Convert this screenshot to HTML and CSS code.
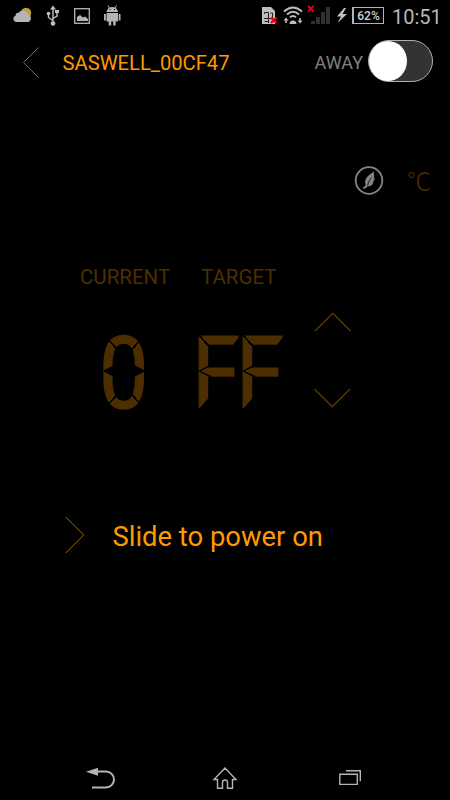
FILE: index.html
```html
<!DOCTYPE html>
<html lang="en">
<head>
    <meta charset="UTF-8">
    <meta name="viewport" content="width=device-width, initial-scale=1.0">
    <title>Thermostat</title>
    <link rel="stylesheet" href="styles.css">
</head>
<body>
    <div class="screen">
        <!-- Status bar -->
        <div class="status-bar">
            <svg class="status-icons" width="130" height="32" viewBox="0 0 130 32">
                <circle cx="26" cy="13" r="5.2" fill="#c3a43c"/>
                <path d="M16 22a3.2 3.2 0 0 1-.5-6.2 3 3 0 0 1 3.2-3 5 5 0 0 1 9 1.5 4 4 0 0 1 .5 7.7z" fill="#b4b4b4"/>
                <g fill="none" stroke="#c0c0c0" stroke-width="1.4">
                    <path d="M53 8v15M48.500 14v3.500l4.500 3M57 12v4l-4 2.500"/>
                </g>
                <path d="M53 5.500l3 4h-6zM55 10h4v3h-4z" fill="#c0c0c0"/>
                <circle cx="48.500" cy="13.500" r="1.800" fill="#c0c0c0"/>
                <circle cx="53" cy="23.500" r="2.300" fill="#c0c0c0"/>
                <rect x="74.700" y="8.700" width="14.600" height="14.600" fill="none" stroke="#b4b4b4" stroke-width="1.300"/>
                <path d="M77 21v-4l3-2 3 2.500 2-1 3 2.500v2z" fill="#b4b4b4"/>
                <path d="M106.500 12a5.700 5 0 0 1 11.500 0zM106.500 13H118v8.500h-2.300v4h-2.500v-4h-2v4h-2.500v-4h-2.200zM104 14h1.800v6.500H104zM118.700 14h1.800v6.500h-1.800z" fill="#b4b4b4"/>
                <path d="M108 5.500l1.700 3M116.500 5.500l-1.700 3" stroke="#b4b4b4"/>
                <path d="M109.500 9.500h1M114 9.500h1" stroke="#000"/>
            </svg>
            <div class="status-right">
                <svg width="90" height="32" viewBox="260 0 90 32">
                    <path d="M262 7h9l4 4v13h-13z" fill="#bdbdbd"/>
                    <path d="M264.500 14v-1.500h4V18M272.500 18v-5h-2M264 18.500h8M268.500 18v5M264.500 21.500h4" stroke="#222" fill="none"/>
                    <path d="M271 17.500l5.500 5.500M276.500 17.500l-5.500 5.500" stroke="#e60012" stroke-width="2.400"/>
                    <g fill="none" stroke="#bdbdbd" stroke-width="1.900">
                        <path d="M284 11.500q9-8 18 0M287 14.500q6-5.500 12 0M290 17.300q3-2.500 6 0"/>
                    </g>
                    <path d="M289.500 24a3.500 3.500 0 0 1 7 0zM286 17.500l2.500 3h-1.700v2.500h-1.600v-2.500h-1.700zM300 23.500l-2.500-3h1.700v-2.500h1.600v2.500h1.700z" fill="#bdbdbd"/>
                    <path d="M308 6l5.500 5.500M313.500 6l-5.500 5.500" stroke="#e60012" stroke-width="2"/>
                    <path d="M311 21h4v3h-4zM316 17h4v7h-4zM321 12h4v12h-4zM326 7h4v17h-4z" fill="#303030"/>
                    <path d="M344 8l-7 8.500h4l-3.500 6.500 9.500-9h-4.500l3.500-6z" fill="#c0c0c0"/>
                </svg>
                <div class="battery">62%</div>
                <div class="clock">10:51</div>
            </div>
        </div>

        <!-- Header -->
        <div class="header">
            <svg class="back" width="18" height="32" viewBox="0 0 18 32">
                <path d="M16.500 1.500L1.500 16.500l15 15"/>
            </svg>
            <h1 class="title">SASWELL_00CF47</h1>
            <span class="away">AWAY</span>
            <div class="switch"><div class="knob"></div></div>
        </div>

        <div class="mode">
            <svg width="30" height="30" viewBox="0 0 30 30">
                <circle cx="15" cy="15.500" r="13.300" fill="none" stroke="#848484" stroke-width="1.800"/>
                <path d="M19.500 6.500c-1 1.500-4 2.500-6 5-2.800 3.500-2.800 5.500-1.800 8-.6 1.800-1.300 2.300-2.800 2.800l.8 1.700c2-.3 3-1.300 3.800-2.700 3.500.2 5.400-1.500 6-4l-1.100.2c1.800-1.700 2.300-3 2.300-4.700l-.9.3c.8-2 .3-4.600-.3-6.600z" fill="#848484"/>
                <path d="M17.500 12.500q-3.200 4-4 8" fill="none" stroke="#000" stroke-width=".7"/>
            </svg>
            <span class="unit">℃</span>
        </div>

        <!-- Temperatures -->
        <div class="panel">
            <div class="reading current">
                <div class="label">CURRENT</div>
                <div class="value"><span class="digit zero">0</span></div>
            </div>
            <div class="reading target">
                <div class="label">TARGET</div>
                <div class="value"><span class="digit letter">F</span><span class="digit letter">F</span></div>
            </div>
            <div class="arrows">
                <svg width="38" height="20" viewBox="0 0 38 20"><path d="M1 19L18.800 1.200 36.500 19"/></svg>
                <svg width="38" height="20" viewBox="0 0 38 20"><path d="M.500 1l17.800 17.800L36 1"/></svg>
            </div>
        </div>

        <div class="slide">
            <svg width="20" height="38" viewBox="0 0 20 38"><path d="M.700 1l18 18-18 18"/></svg>
            <span>Slide to power on</span>
        </div>

        <!-- Navigation bar -->
        <div class="nav-bar">
            <svg width="30" height="24" viewBox="86 766 30 24">
                <path d="M92 771.500h14a7.900 7.900 0 0 1 0 16H92" fill="none" stroke="#b4b4b4" stroke-width="2"/>
                <path d="M86 771.800l12-4v8z" fill="#b4b4b4"/>
            </svg>
            <svg width="26" height="24" viewBox="212 766 26 24">
                <path d="M225 768l-11 11.500h3.500v8.700h5v-5.700a2.500 2.500 0 0 1 5 0v5.700h5v-8.700h3.500z" fill="none" stroke="#b4b4b4" stroke-width="1.400"/>
            </svg>
            <svg width="24" height="24" viewBox="338 766 24 24">
                <path d="M339.800 774.200h17.500v10.200h-17.500zM346 770.700h14.300v10.500" fill="none" stroke="#b4b4b4" stroke-width="1.400"/>
            </svg>
        </div>
    </div>
</body>
</html>
```
FILE: styles.css
```css
* {
    box-sizing: border-box;
}

body {
    margin: 0;
    background: #000;
    font-family: Roboto, "Liberation Sans", sans-serif;
}

svg {
    display: block;
    flex: none;
}

.screen {
    width: 450px;
    height: 800px;
    overflow: hidden;
    background: #000;
}

/* Status bar */
.status-bar {
    display: flex;
    justify-content: space-between;
    height: 32px;
}

.status-right {
    display: flex;
    width: 190px;
}

.battery {
    width: 32px;
    height: 17px;
    margin: 7px 0 0 2px;
    border: 1px solid #b4b4b4;
    border-left-width: 2px;
    color: #d0d0d0;
    font-size: 12px;
    font-weight: 500;
    line-height: 16px;
    text-align: center;
}

.clock {
    margin-left: 8px;
    color: #b8b8b8;
    font-size: 20px;
    line-height: 34px;
}

/* Header */
.header {
    display: flex;
    align-items: center;
    height: 60px;
    padding: 0 17px 0 22px;
}

.back {
    fill: none;
    stroke: #a86500;
    stroke-width: 1;
}

.title {
    margin: 2px 0 0 22.5px;
    color: #ff9900;
    font-size: 20.2px;
    font-weight: 400;
}

.away {
    margin: 1px 5px 0 auto;
    color: #808080;
    font-size: 18px;
}

.switch {
    width: 65px;
    height: 42px;
    margin-top: -2px;
    border: 1px solid #b0b0b0;
    border-radius: 21px;
    background: #333;
}

.knob {
    width: 38px;
    height: 40px;
    border-radius: 50%;
    background: #fff;
}

.mode {
    display: flex;
    height: 30px;
    margin-top: 73px;
    padding-left: 354px;
}

.unit {
    margin-left: 23px;
    color: #4d2e00;
    font-family: "Noto Sans CJK SC", sans-serif;
    font-size: 24px;
    font-weight: 300;
    line-height: 29px;
}

/* Temperatures */
.panel {
    display: flex;
    height: 150px;
    margin-top: 70px;
    padding-left: 79px;
    color: #4d2e00;
}

.current {
    width: 119px;
}

.target {
    width: 116px;
}

.label {
    padding-left: 1px;
    font-size: 20.5px;
    line-height: 24px;
}

.target .label {
    padding-left: 3px;
}

.value {
    display: flex;
    margin-top: 35px;
    font-size: 101px;
    line-height: 99px;
    -webkit-text-stroke: 1.5px #4d2e00;
}

.digit {
    display: block;
    position: relative;
    width: 44px;
    height: 100px;
    transform: scaleX(.87);
    transform-origin: left;
}

.zero {
    margin-left: 20px;
}

/* Gaps between the display segments */
.zero::before {
    content: "";
    position: absolute;
    left: 4px;
    top: 36px;
    width: 50px;
    height: 22px;
    background: #000;
    clip-path: polygon(0 50%, 50% 0, 100% 50%, 50% 100%);
}

.zero::after {
    content: "";
    position: absolute;
    left: 6px;
    top: 11px;
    width: 46px;
    height: 74px;
    background:
        linear-gradient(45deg, transparent 47%, #000 47%, #000 55%, transparent 55%) top left / 16px 16px no-repeat,
        linear-gradient(135deg, transparent 47%, #000 47%, #000 55%, transparent 55%) top right / 16px 16px no-repeat,
        linear-gradient(135deg, transparent 47%, #000 47%, #000 55%, transparent 55%) bottom left / 16px 16px no-repeat,
        linear-gradient(45deg, transparent 47%, #000 47%, #000 55%, transparent 55%) bottom right / 16px 16px no-repeat;
}

.target .value {
    margin-left: -6px;
}

.letter {
    clip-path: polygon(0 0, 66px 0, 46px 22px, 60px 22px, 60px 60px, 20px 73px, 8px 85px, 0 85px);
}

.letter::before {
    content: "";
    position: absolute;
    left: 7px;
    top: 10px;
    width: 15px;
    height: 15px;
    background: linear-gradient(45deg, transparent 46%, #000 46%, #000 55%, transparent 55%);
}

.letter::after {
    content: "";
    position: absolute;
    left: 7px;
    top: 40px;
    width: 15px;
    height: 14px;
    background: #000;
    clip-path: polygon(0 50%, 100% 0, 100% 14%, 20% 50%, 100% 86%, 100% 100%);
}

.arrows {
    display: flex;
    flex-direction: column;
    gap: 56px;
    padding-top: 47px;
}

.arrows path {
    fill: none;
    stroke: #5c3700;
    stroke-width: 1.4;
}

.slide {
    display: flex;
    align-items: center;
    height: 38px;
    margin-top: 101px;
    padding-left: 65px;
    color: #ff9900;
    font-size: 27.4px;
}

.slide path {
    fill: none;
    stroke: #a86500;
    stroke-width: 1;
}

.slide span {
    margin: 4px 0 0 27.5px;
}

/* Navigation bar */
.nav-bar {
    display: flex;
    gap: 96px;
    margin-top: 212px;
    padding-left: 86px;
}

.nav-bar svg:last-child {
    margin-left: 4px;
}
```
